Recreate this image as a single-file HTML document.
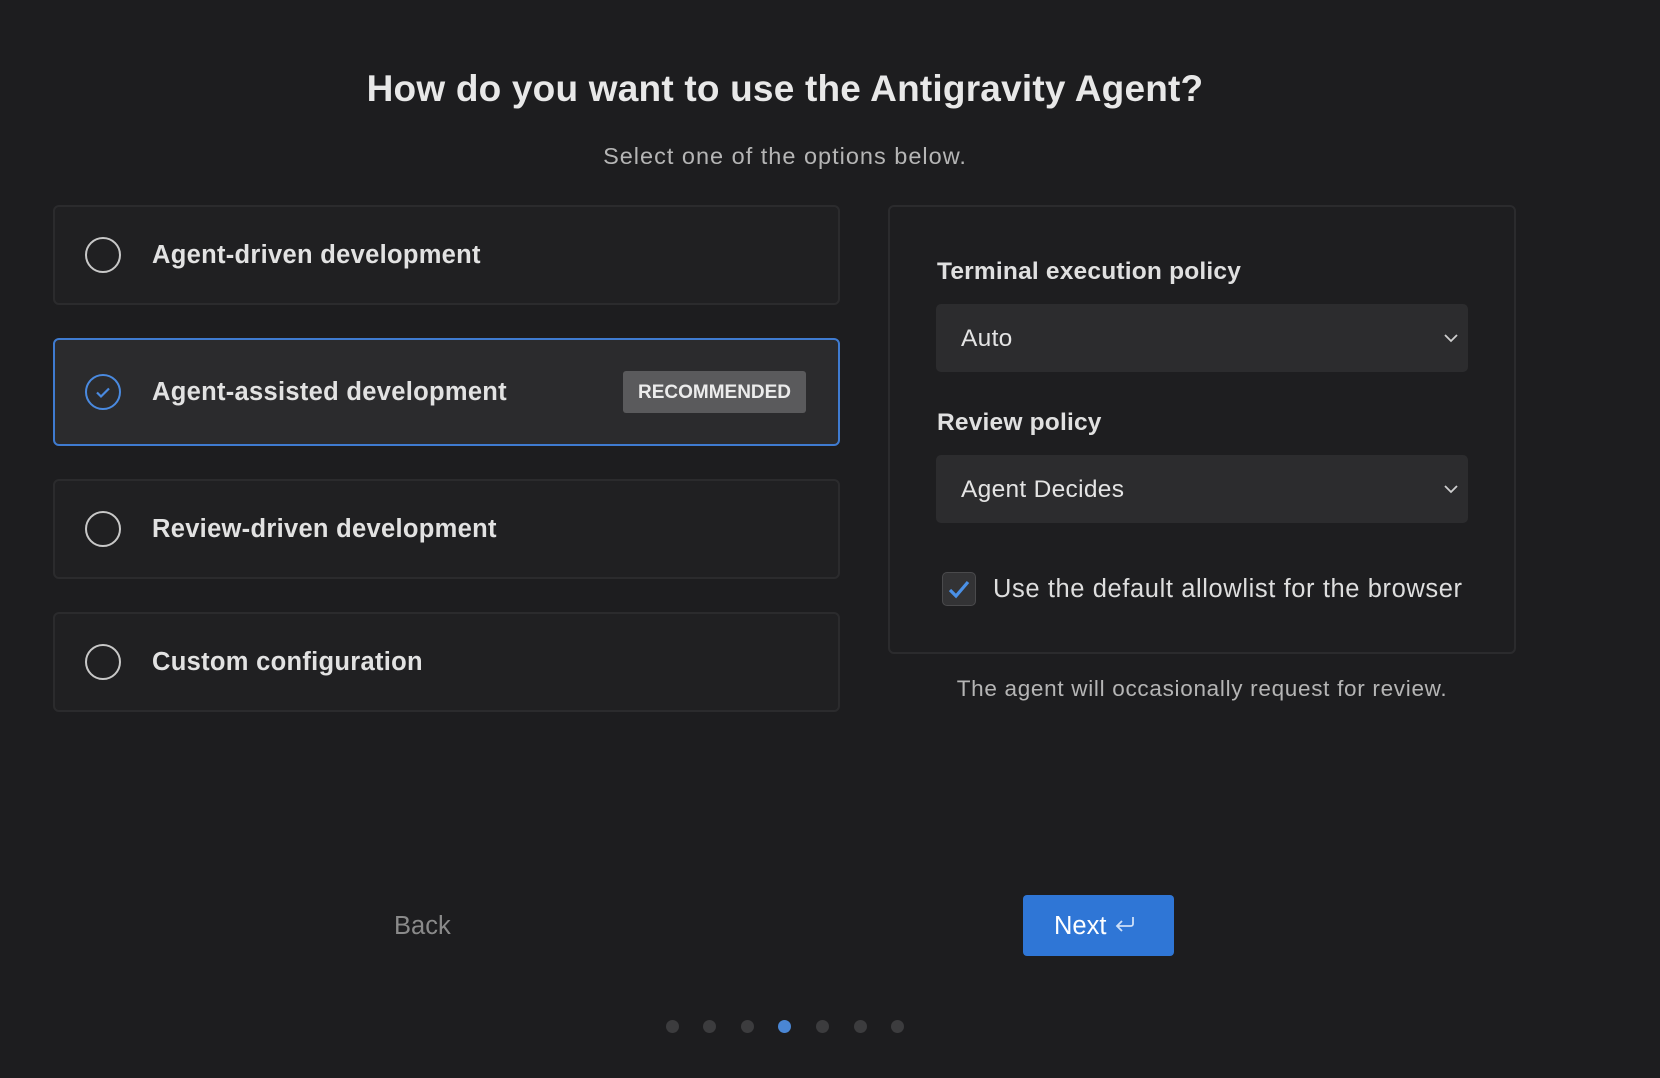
<!DOCTYPE html>
<html><head><meta charset="utf-8"><style>
*{margin:0;padding:0;box-sizing:border-box}
body{width:1660px;height:1078px;background:#1d1d1f;font-family:"Liberation Sans",sans-serif;position:relative;overflow:hidden;color:#e6e6e6}
.a{position:absolute}
h1{position:absolute;left:0;width:1570px;text-align:center;top:68px;font-size:37px;font-weight:bold;color:#e8e8e8;letter-spacing:0.2px}
.sub{left:0;width:1570px;text-align:center;top:143px;font-size:23.5px;color:#b5b5b5;letter-spacing:1px}
.card{position:absolute;left:53px;width:787px;background:#202022;border:2px solid #2b2b2d;border-radius:6px}
.card.sel{background:#2b2b2d;border-color:#3f7bd0}
.radio{position:absolute;left:30px;top:50%;margin-top:-18px;width:36px;height:36px;border:2px solid #c8c8c8;border-radius:50%}
.sel .radio{border-color:#4a8ae0}
.lab{position:absolute;left:97px;top:50%;transform:translateY(-48%);font-size:25.5px;font-weight:bold;color:#e2e2e2;letter-spacing:0.3px}
.badge{position:absolute;left:568px;top:31px;width:183px;height:42px;background:#5a5a5c;border-radius:3px;font-size:19px;font-weight:bold;color:#ececec;text-align:center;line-height:43px}
.panel{left:888px;top:205px;width:628px;height:449px;border:2px solid #2b2b2d;border-radius:6px;background:#1e1e20}
.pl{font-size:24.5px;font-weight:bold;color:#e0e0e0;letter-spacing:0.2px}
.selbox{position:absolute;left:936px;width:532px;height:68px;background:#2c2c2e;border-radius:5px;font-size:24.5px;color:#e4e4e4;line-height:70px;padding-left:25px;letter-spacing:0.3px}
.selbox svg{position:absolute;right:8px;top:28px}
.dot{position:absolute;top:1020px;width:13px;height:13px;border-radius:50%;background:#3c3c3e}
</style></head><body>
<h1>How do you want to use the Antigravity Agent?</h1>
<div class="a sub">Select one of the options below.</div>

<div class="card" style="top:205px;height:100px"><div class="radio"></div><div class="lab">Agent-driven development</div></div>
<div class="card sel" style="top:338px;height:108px"><div class="radio"><svg width="32" height="32" viewBox="0 0 32 32" style="position:absolute;left:0;top:0"><path d="M10 16.5l4 4 8-8" fill="none" stroke="#4a8ae0" stroke-width="2.2"/></svg></div><div class="lab">Agent-assisted development</div><div class="badge">RECOMMENDED</div></div>
<div class="card" style="top:479px;height:100px"><div class="radio"></div><div class="lab">Review-driven development</div></div>
<div class="card" style="top:612px;height:100px"><div class="radio"></div><div class="lab">Custom configuration</div></div>

<div class="a panel"></div>
<div class="a pl" style="left:937px;top:258px">Terminal execution policy</div>
<div class="selbox" style="top:304px">Auto<svg width="18" height="12" viewBox="0 0 18 12"><path d="M3 3l6 6 6-6" fill="none" stroke="#cfcfcf" stroke-width="1.8"/></svg></div>
<div class="a pl" style="left:937px;top:409px">Review policy</div>
<div class="selbox" style="top:455px">Agent Decides<svg width="18" height="12" viewBox="0 0 18 12"><path d="M3 3l6 6 6-6" fill="none" stroke="#cfcfcf" stroke-width="1.8"/></svg></div>
<div class="a" style="left:942px;top:572px;width:34px;height:34px;background:#333335;border:1px solid #4a4a4c;border-radius:5px"><svg width="32" height="32" viewBox="0 0 32 32"><path d="M7 17l6 6 12-14" fill="none" stroke="#4a90e6" stroke-width="3.2"/></svg></div>
<div class="a" style="left:993px;top:575px;font-size:25.5px;color:#dedede;letter-spacing:0.6px">Use the default allowlist for the browser</div>
<div class="a" style="left:888px;width:628px;text-align:center;top:676px;font-size:22.5px;color:#b5b5b5;letter-spacing:0.7px">The agent will occasionally request for review.</div>

<div class="a" style="left:394px;top:912px;font-size:25.5px;color:#8a8a8a">Back</div>
<div class="a" style="left:1023px;top:895px;width:151px;height:61px;background:#2f76d6;border-radius:4px;color:#fff;font-size:25.5px;line-height:63px;padding-left:31px">Next <svg width="22" height="20" viewBox="0 0 22 20" style="vertical-align:-1px"><path d="M19 2v7a2 2 0 0 1-2 2H4M8 6l-5 5 5 5" fill="none" stroke="#cfe0f7" stroke-width="1.8"/></svg></div>

<div class="dot" style="left:666px"></div>
<div class="dot" style="left:703px"></div>
<div class="dot" style="left:741px"></div>
<div class="dot" style="left:778px;background:#4a86d4"></div>
<div class="dot" style="left:816px"></div>
<div class="dot" style="left:854px"></div>
<div class="dot" style="left:891px"></div>
</body></html>
